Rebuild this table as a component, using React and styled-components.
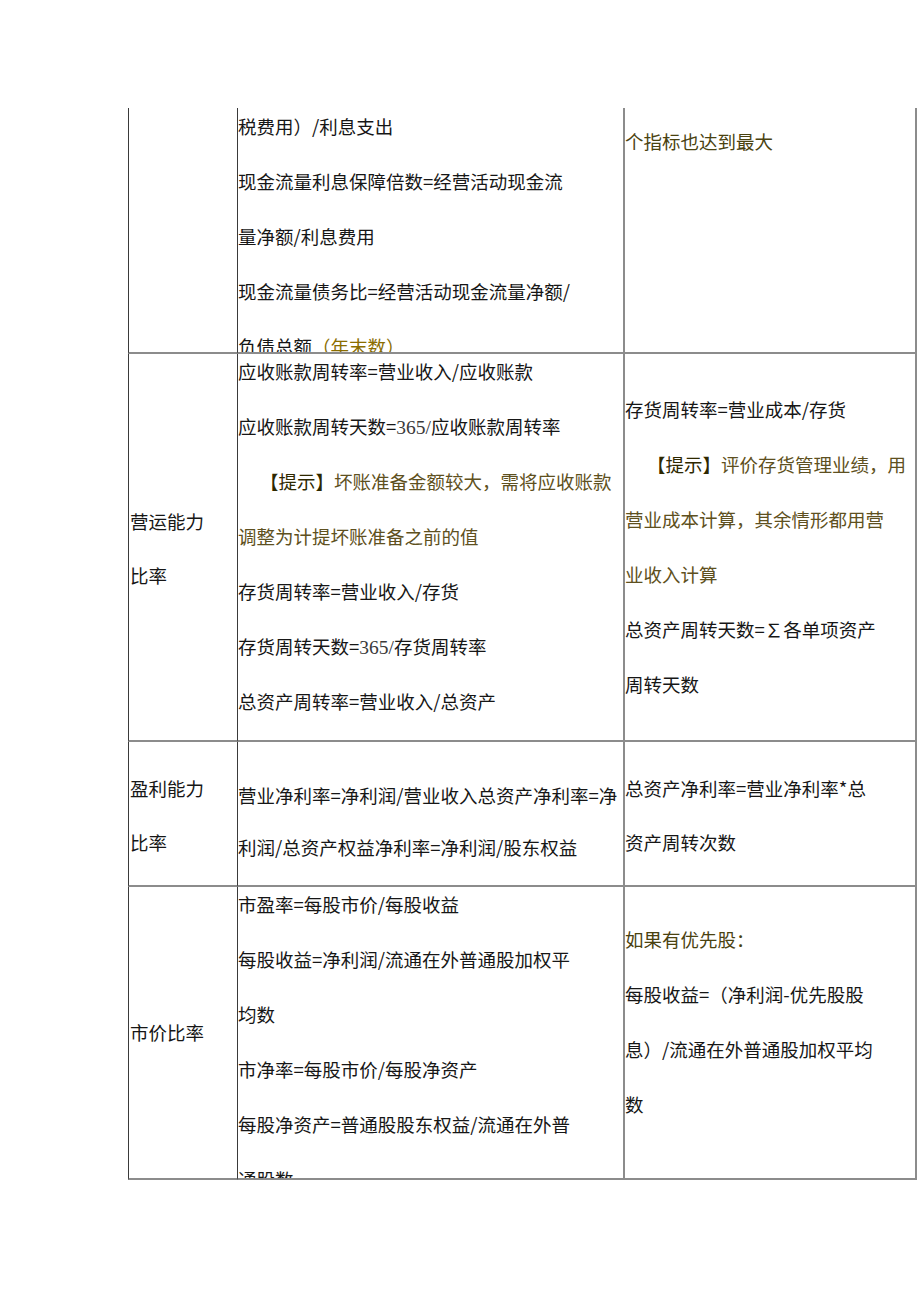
import React from 'react';
import styled, { createGlobalStyle } from 'styled-components';

const GlobalStyle = createGlobalStyle`
    body {
        margin: 0;
        background: #ffffff;
        font-family: "Noto Sans CJK SC", "Noto Sans", sans-serif;
    }
`;

const Page = styled.div`
    min-height: 1301px;
    padding: 108px 0 0 128px;
    box-sizing: border-box;
    background: #ffffff;
`;

const Table = styled.div`
    display: grid;
    grid-template-columns: 110px 387px 292px;
    grid-template-rows: 246px 388px 145px 293px;
    width: max-content;
`;

const tones = {
    text: '#161616',
    olive: '#4a4210',
    hint: '#5e5020',
};

const Cell = styled.div`
    box-sizing: border-box;
    overflow: hidden;
    padding-top: ${props => props.$top || 0}px;
    padding-left: ${props => props.$col === 1 ? 1 : 0}px;
    border-bottom: 2px solid #8c8c8c;
    border-left: ${props => props.$col === 1 ? '1px solid #3a3a3a' : 'none'};
    border-right: ${props => props.$col === 1 ? '1px solid #3a3a3a' : '2px solid #8c8c8c'};
`;

const Line = styled.div`
    height: ${props => props.$step || 55}px;
    line-height: 34px;
    font-size: 18.5px;
    white-space: nowrap;
    color: ${props => tones[props.$tone || 'text']};
    padding-left: ${props => props.$indent ? 22 : 0}px;
`;

const Tip = styled.span`
    color: #2e2800;
`;

const Gold = styled.span`
    color: #8a6d00;
`;

const Num = styled.span`
    font-family: "Liberation Serif", serif;
    font-size: 19.5px;
    color: #3a3a3a;
`;

const App = () => {
    return (
        <Page>
            <GlobalStyle />
            <Table>
                <Cell $col={1} />
                <Cell $col={2} $top={1}>
                    <Line>税费用）/利息支出</Line>
                    <Line>现金流量利息保障倍数=经营活动现金流</Line>
                    <Line>量净额/利息费用</Line>
                    <Line>现金流量债务比=经营活动现金流量净额/</Line>
                    <Line>负债总额<Gold>（年末数）</Gold></Line>
                </Cell>
                <Cell $col={3} $top={16}>
                    <Line $tone="olive">个指标也达到最大</Line>
                </Cell>

                <Cell $col={1} $top={150}>
                    <Line $step={54}>营运能力</Line>
                    <Line>比率</Line>
                </Cell>
                <Cell $col={2} $top={-1}>
                    <Line>应收账款周转率=营业收入/应收账款</Line>
                    <Line>应收账款周转天数=<Num>365/</Num>应收账款周转率</Line>
                    <Line $tone="hint" $indent><Tip>【提示】</Tip>坏账准备金额较大，需将应收账款</Line>
                    <Line $tone="hint">调整为计提坏账准备之前的值</Line>
                    <Line>存货周转率=营业收入/存货</Line>
                    <Line>存货周转天数=<Num>365/</Num>存货周转率</Line>
                    <Line>总资产周转率=营业收入/总资产</Line>
                </Cell>
                <Cell $col={3} $top={38}>
                    <Line>存货周转率=营业成本/存货</Line>
                    <Line $tone="hint" $indent><Tip>【提示】</Tip>评价存货管理业绩，用</Line>
                    <Line $tone="hint">营业成本计算，其余情形都用营</Line>
                    <Line $tone="hint">业收入计算</Line>
                    <Line>总资产周转天数=∑各单项资产</Line>
                    <Line>周转天数</Line>
                </Cell>

                <Cell $col={1} $top={29}>
                    <Line $step={54}>盈利能力</Line>
                    <Line>比率</Line>
                </Cell>
                <Cell $col={2} $top={36}>
                    <Line $step={52}>营业净利率=净利润/营业收入总资产净利率=净</Line>
                    <Line>利润/总资产权益净利率=净利润/股东权益</Line>
                </Cell>
                <Cell $col={3} $top={29}>
                    <Line $step={54}>总资产净利率=营业净利率*总</Line>
                    <Line>资产周转次数</Line>
                </Cell>

                <Cell $col={1} $top={128}>
                    <Line>市价比率</Line>
                </Cell>
                <Cell $col={2} $top={0}>
                    <Line>市盈率=每股市价/每股收益</Line>
                    <Line>每股收益=净利润/流通在外普通股加权平</Line>
                    <Line>均数</Line>
                    <Line>市净率=每股市价/每股净资产</Line>
                    <Line>每股净资产=普通股股东权益/流通在外普</Line>
                    <Line>通股数</Line>
                </Cell>
                <Cell $col={3} $top={35}>
                    <Line $tone="olive">如果有优先股：</Line>
                    <Line>每股收益=（净利润-优先股股</Line>
                    <Line>息）/流通在外普通股加权平均</Line>
                    <Line>数</Line>
                </Cell>
            </Table>
        </Page>
    );
};

export default App;
